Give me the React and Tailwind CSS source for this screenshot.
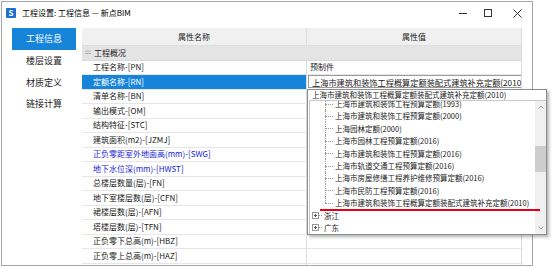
import React from 'react';

const rows = [
  { n: '工程名称-[PN]', v: '预制件' },
  { n: '定额名称-[RN]', sel: true },
  { n: '清单名称-[BN]' },
  { n: '输出模式-[OM]' },
  { n: '结构特征-[STC]' },
  { n: '建筑面积(m2)-[JZMJ]' },
  { n: '正负零距室外地面高(mm)-[SWG]', blue: true },
  { n: '地下水位深(mm)-[HWST]', blue: true },
  { n: '总楼层数量(层)-[FN]' },
  { n: '地下室楼层数(层)-[CFN]' },
  { n: '裙楼层数(层)-[AFN]' },
  { n: '塔楼层数(层)-[TFN]' },
  { n: '正负零下总高(m)-[HBZ]' },
  { n: '正负零上总高(m)-[HAZ]' },
  { n: '地下室楼层高(m)-[CFH]' },
];

const children = [
  '上海市建筑和装饰工程预算定额(1993)',
  '上海市建筑和装饰工程预算定额(2000)',
  '上海园林定额(2000)',
  '上海市园林工程预算定额(2016)',
  '上海市建筑和装饰工程预算定额(2016)',
  '上海市轨道交通工程预算定额(2016)',
  '上海市房屋修缮工程养护维修预算定额(2016)',
  '上海市民防工程预算定额(2016)',
  '上海市建筑和装饰工程概算定额装配式建筑补充定额(2010)',
];

function Plus() {
  return (
    <svg width="7" height="7" viewBox="0 0 7 7" className="shrink-0">
      <rect x="0.5" y="0.5" width="6" height="6" fill="white" stroke="#9a9a9a" />
      <path d="M2 3.5H5M3.5 2V5" stroke="#555" strokeWidth="1" />
    </svg>
  );
}

export default function App() {
  return (
    <div className="relative w-[554px] h-[267px] bg-white overflow-hidden pl-[1px] pt-[1px] font-['Noto_Sans_CJK_SC',sans-serif] text-[#222]">
      <div className="w-[532px] h-[265px] border border-[#a6a6a6] flex flex-col">
        {/* title bar */}
        <div className="h-[26px] shrink-0 flex items-start pt-[6px] relative">
          <div className="ml-[4px] w-[10px] h-[10px] bg-[#1f6fcf] rounded-[1px] flex items-center justify-center text-white text-[8px] font-bold leading-none">S</div>
          <div className="ml-[6px] text-[8px] leading-[10px] text-black">工程设置: 工程信息 — 新点BIM</div>
          <div className="ml-auto flex items-center h-[10px] mr-[10px]">
            <div className="w-[8px] h-[1px] bg-[#333]" />
            <div className="ml-[17px] w-[8px] h-[8px] border border-[#333]" />
            <svg width="9" height="9" viewBox="0 0 9 9" className="ml-[21px]">
              <path d="M0.5 0.5L8.5 8.5M8.5 0.5L0.5 8.5" stroke="#333" strokeWidth="1" />
            </svg>
          </div>
        </div>
        {/* body */}
        <div className="flex flex-1 min-h-0">
          <div className="w-[80px] shrink-0 text-[9px]">
            <div className="ml-[10px] w-[64px] h-[22px] leading-[22px] bg-[#1684d8] text-white text-center">工程信息</div>
            <div className="ml-[10px] w-[64px] h-[22px] leading-[22px] text-center">楼层设置</div>
            <div className="ml-[10px] w-[64px] h-[21px] leading-[21px] text-center">材质定义</div>
            <div className="ml-[10px] w-[64px] h-[22px] leading-[22px] text-center">链接计算</div>
          </div>
          <div className="w-[440px] shrink-0 border-r border-[#dcdcdc] flex flex-col text-[8px] overflow-hidden">
            <div className="h-[18px] shrink-0 flex bg-[#f0f0f0] border-b border-[#dedede]">
              <div className="w-[225px] border-r border-[#dcdcdc] flex items-center justify-center">属性名称</div>
              <div className="flex-1 flex items-center justify-center">属性值</div>
            </div>
            <div className="h-[14.5px] shrink-0 flex items-center bg-[#e4e4e4] border-b border-[#d8d8d8]">
              <svg width="6" height="5" viewBox="0 0 6 5" className="ml-[3px]">
                <path d="M0 1H6M0 3.5H6" stroke="#b0b0b0" strokeWidth="1" />
              </svg>
              <span className="ml-[3px]">工程概况</span>
            </div>
            {rows.map((r, i) => (
              <div key={i} className="h-[14.5px] shrink-0 flex border-b border-[#e6e6e6]">
                <div className={`w-[225px] shrink-0 border-r border-[#dcdcdc] flex items-center pl-[11px] whitespace-nowrap ${r.sel ? 'bg-[#1684d8] text-white' : r.blue ? 'text-[#2323d6]' : ''}`}>
                  {r.n}
                </div>
                <div className="flex-1 flex items-center whitespace-nowrap overflow-hidden">
                  {r.sel ? (
                    <div className="ml-[1px] mr-[1px] h-[13px] flex-1 border border-[#9a9a9a] bg-white flex items-center pl-[3px]">
                      <span className="flex-1 overflow-hidden whitespace-nowrap text-[8.2px]">上海市建筑和装饰工程概算定额装配式建筑补充定额(2010)</span>
                      <svg width="6" height="4" viewBox="0 0 6 4" className="mx-[3px] shrink-0">
                        <path d="M0.5 0.5L3 3L5.5 0.5" stroke="#888" fill="none" />
                      </svg>
                    </div>
                  ) : (
                    <span className="pl-[3px]">{r.v || ''}</span>
                  )}
                </div>
              </div>
            ))}
          </div>
        </div>
      </div>

      {/* dropdown */}
      <div className="absolute left-[307px] top-[89px] w-[240px] h-[146px] bg-white border border-[#8c8c8c] shadow-[2px_2px_3px_rgba(0,0,0,0.3)] flex flex-col text-[7.5px]">
        <div className="h-[10px] shrink-0 flex items-center pl-[4px] whitespace-nowrap leading-none">上海市建筑和装饰工程概算定额装配式建筑补充定额(2010)</div>
        <div className="flex-1 ml-[1px] border-t border-l border-[#c8c8c8] flex min-h-0 overflow-hidden">
          <div className="flex-1 overflow-hidden">
            <div className="mt-[-3.5px]">
              {children.map((c, i) => (
                <div key={i} className="relative h-[12.4px] flex items-center pl-[25px] whitespace-nowrap">
                  <span className={`absolute left-[15px] top-0 border-l border-dotted border-[#9a9a9a] ${i === children.length - 1 ? 'h-1/2' : 'h-full'}`} />
                  <span className="absolute left-[15px] top-1/2 w-[8px] border-t border-dotted border-[#9a9a9a]" />
                  <span>{c}</span>
                </div>
              ))}
              {['浙江', '广东'].map((c) => (
                <div key={c} className="h-[12.4px] flex items-center pl-[2px] whitespace-nowrap">
                  <Plus />
                  <span className="w-[3px] border-t border-dotted border-[#9a9a9a]" />
                  <span className="ml-[2px]">{c}</span>
                </div>
              ))}
            </div>
          </div>
          <div className="w-[11px] shrink-0 bg-[#f0f0f0] flex flex-col items-center">
            <svg width="6" height="4" viewBox="0 0 6 4" className="mt-[4px]">
              <path d="M0.5 3.5L3 1L5.5 3.5" stroke="#a0a0a0" fill="none" />
            </svg>
            <div className="mt-[37px] w-[11px] h-[26px] bg-[#cdcdcd]" />
            <svg width="6" height="4" viewBox="0 0 6 4" className="mt-auto mb-[4px]">
              <path d="M0.5 0.5L3 3L5.5 0.5" stroke="#a0a0a0" fill="none" />
            </svg>
          </div>
        </div>
      </div>

      {/* red annotation */}
      <div className="absolute left-[320px] top-[209px] w-[220px] h-[2px] bg-[#e2001a]" />
    </div>
  );
}
